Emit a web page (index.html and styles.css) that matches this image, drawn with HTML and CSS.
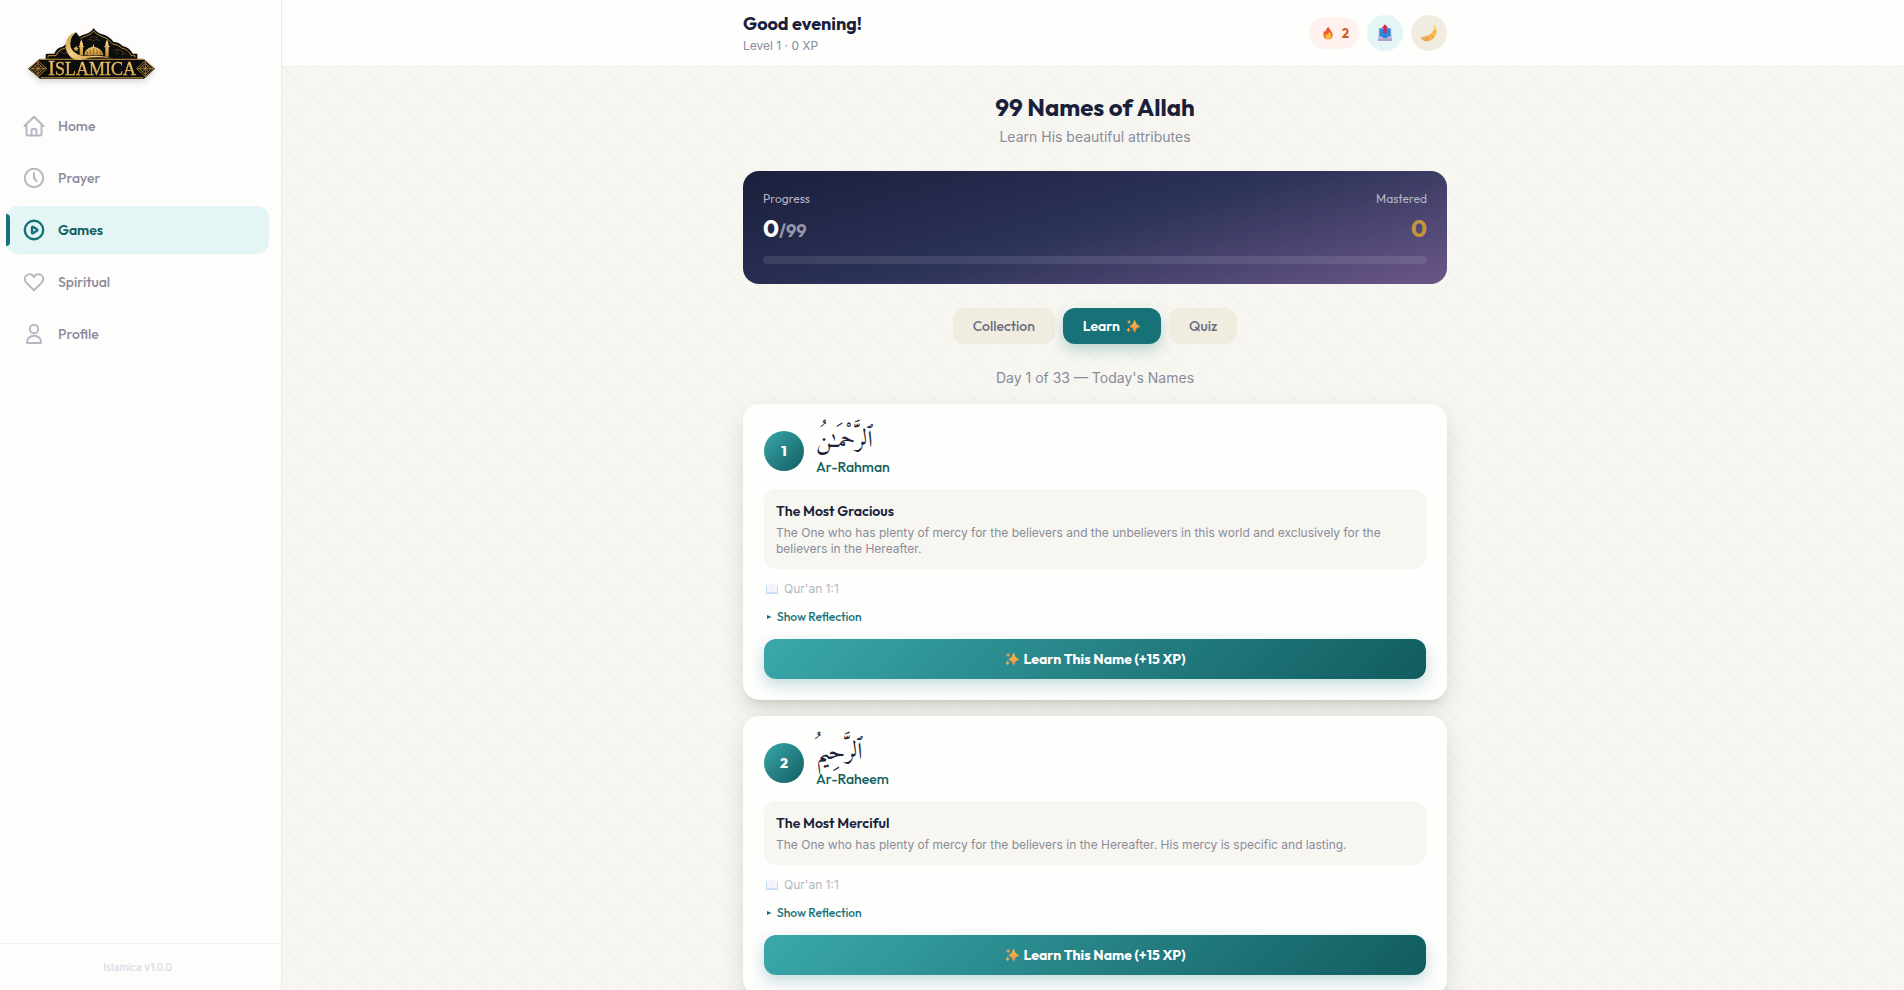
FILE: index.html
```html
<!DOCTYPE html>
<html lang="en">
  <head>
  <meta charset="utf-8">
  <title>Islamica</title>
  <link rel="stylesheet" href="styles.css">
  </head>
  <body>
    <!-- shared icons -->
    <svg class="defs" aria-hidden="true">
      <defs>
        <linearGradient id="spark" x1="0" y1="0" x2="0" y2="1">
          <stop offset="0" stop-color="#ffc23d"/><stop offset="1" stop-color="#f0864f"/>
        </linearGradient>
        <linearGradient id="flame" x1="0" y1="0" x2="0" y2="1">
          <stop offset="0" stop-color="#e5323b"/><stop offset="1" stop-color="#f98a2c"/>
        </linearGradient>
        <linearGradient id="moon" x1="1" y1="0" x2="0" y2="1">
          <stop offset="0" stop-color="#ffd45c"/><stop offset="1" stop-color="#ee9a4e"/>
        </linearGradient>
        <symbol id="sparkles" viewBox="0 0 16 16">
          <g fill="url(#spark)">
            <path d="M9.8 1.6 Q10.6 7 15.6 8.4 Q10.6 9.800 9.800 15.200 Q9 9.800 4.400 8.400 Q9 7 9.800 1.600Z" stroke="url(#spark)" stroke-width="1"/>
            <path d="M3.500 .8 Q3.900 3 6 3.500 Q3.900 4 3.500 6.200 Q3.100 4 1 3.500 Q3.100 3 3.500 .8Z"/>
            <path d="M2.900 9.800 Q3.400 12 5.600 12.500 Q3.400 13 2.900 15.400 Q2.400 13 .2 12.500 Q2.400 12 2.900 9.800Z"/>
          </g>
        </symbol>
        <symbol id="book" viewBox="0 0 14 14">
          <path d="M1 3h12v9H1z" fill="#9cc4ee"/>
          <path d="M2 2.500 Q5 1.500 7 3 Q9 1.500 12 2.500 V10.500 Q9 9.500 7 11 Q5 9.500 2 10.500Z" fill="#f3eefa"/>
          <path d="M7 3V11" stroke="#d9cdea" stroke-width=".7"/>
        </symbol>
      </defs>
    </svg>

    <div class="app">
      <aside class="sidebar">
        <a class="logo" href="#" aria-label="Islamica">
          <svg viewBox="0 0 435 210" width="145" height="70">
            <defs>
              <linearGradient id="gold" x1="0" y1="0" x2="0" y2="1">
                <stop offset="0" stop-color="#fbe6a0"/><stop offset=".5" stop-color="#e3b55a"/><stop offset="1" stop-color="#bd8a33"/>
              </linearGradient>
              <linearGradient id="crescent" x1="0" y1="0" x2="1" y2="1">
                <stop offset="0" stop-color="#c9983f"/><stop offset=".5" stop-color="#f3d488"/><stop offset="1" stop-color="#c9983f"/>
              </linearGradient>
            </defs>
            <path d="M77 118V104Q77 101 82 101H103Q110 82 128 80Q146 66 162 66Q176 46 198 42Q214 36 221 24Q228 36 244 42Q266 46 281 66Q296 66 308 78Q328 82 338 101H352V118Z" fill="#0d0d0e"/>
            <path d="M84 112V107H108Q114 88 132 86Q148 73 166 72Q180 52 200 48Q214 43 221 33Q228 43 242 48Q262 52 278 72Q292 73 305 84Q324 88 334 107H345V112" fill="none" stroke="#b98a35" stroke-width="3"/>
            <g fill="none" stroke="#5c4a26" stroke-width="2">
              <path d="M112 104q6-14 16-6t14-6M292 104q-6-14 6-14t12 12M306 108q4-12 16-4M280 92q10-8 18-2"/>
              <path d="M200 62q10-8 20 0q12-8 20 0M208 54q12-8 26 0"/>
            </g>
            <path d="M58 118H372L405 146L372 176H60L24 146Z" fill="#0d0d0e"/>
            <path d="M60 116H372V119H60ZM62 172H370V175H62Z" fill="#b98a35"/>
            <g fill="none" stroke="#b98a35" stroke-width="2.500">
              <path d="M28 146L54 122L80 146L54 170Z M36 146L54 130L72 146L54 162Z M45 138L63 154M63 138L45 154M54 124V168M32 146H78"/>
              <path d="M350 146L376 122L402 146L376 170Z M358 146L376 130L394 146L376 162Z M367 138L385 154M385 138L367 154M376 124V168M352 146H400"/>
            </g>
            <path d="M150 76C150 55 156 45 168 37L180 52L200 110H180C160 104 150 92 150 76Z" fill="#0d0d0e"/>
            <g fill="url(#gold)">
              <path d="M193 106Q192 86 218 80L220 70L222 80Q248 86 250 106Z"/>
              <path d="M179 106V72L184 58L189 72V106Z M256 110V72L261 58L266 72V110Z"/>
              <path d="M176 78H192V82H176ZM253 78H269V82H253Z"/>
              <path d="M168 77L171 83L177 84L172 88L174 94L168 91L163 94L164 88L160 84L166 83Z"/>
              <path d="M200 110Q240 102 278 116Q236 109 200 114Z"/>
            </g>
            <path d="M168 37C147 42 136 60 137 80C138 104 158 122 182 120C198 118 210 114 214 106C188 112 158 102 152 80C148 62 156 46 168 37Z" fill="url(#crescent)"/>
            <path d="M202 104V94M211 104V88M221 104V84M231 104V88M241 104V94" stroke="#6d4d17" stroke-width="2"/>
            <text class="logo-text" x="84" y="165"><tspan class="logo-cap">I</tspan>SLAMICA</text>
          </svg>
        </a>

        <nav class="nav">
          <a class="nav-item" href="#">
            <svg viewBox="0 0 24 24"><path d="M2.500 12L12 2.800L21.500 12M4.500 10V20a1.500 1.500 0 0 0 1.500 1.500H18a1.500 1.500 0 0 0 1.500-1.500V10M9.500 21.500V16.500a1.500 1.500 0 0 1 1.500-1.500h2a1.500 1.500 0 0 1 1.500 1.500V21.500"/></svg>
            <span>Home</span>
          </a>
          <a class="nav-item" href="#">
            <svg viewBox="0 0 24 24"><circle cx="12" cy="12" r="9.200"/><path d="M12 7V12L14.500 15"/></svg>
            <span>Prayer</span>
          </a>
          <a class="nav-item active" href="#">
            <svg viewBox="0 0 24 24"><circle cx="12" cy="12" r="9.200"/><path d="M10 9.300V14.700a.6.600 0 0 0 .9.500L15.200 12.500a.6.600 0 0 0 0-1L10.900 8.800a.6.600 0 0 0-.9.500Z"/></svg>
            <span>Games</span>
          </a>
          <a class="nav-item" href="#">
            <svg viewBox="0 0 24 24"><path d="M12 20.300L4.300 12.600A5 5 0 0 1 2.800 9C2.800 6.200 5 4.300 7.500 4.300C9.500 4.300 11.100 5.300 12 6.900C12.900 5.300 14.500 4.300 16.500 4.300C19 4.300 21.200 6.200 21.200 9A5 5 0 0 1 19.700 12.600Z"/></svg>
            <span>Spiritual</span>
          </a>
          <a class="nav-item" href="#">
            <svg viewBox="0 0 24 24"><circle cx="12" cy="7" r="4.200"/><path d="M5 20.200C5 16.500 8 13.800 12 13.800S19 16.500 19 20.200a.9.900 0 0 1-.9.900H5.900A.9.900 0 0 1 5 20.200Z"/></svg>
            <span>Profile</span>
          </a>
        </nav>

        <footer class="version">Islamica v1.0.0</footer>
      </aside>

      <div class="content">
        <header class="topbar">
          <div class="wrap topbar-inner">
            <div>
              <div class="greeting">Good evening!</div>
              <div class="level">Level 1 · 0 XP</div>
            </div>
            <div class="actions">
              <div class="streak">
                <svg viewBox="0 0 16 16" width="14" height="14">
                  <path d="M8.300 .8Q9 3 11 5Q13.300 7.500 13.300 10.300Q13.300 15.300 8 15.300Q2.700 15.300 2.700 10Q2.700 7.500 4.400 5.200Q5 6.200 5.600 6.400Q5.500 3.500 8.300 .8Z" fill="url(#flame)"/>
                  <path d="M9.500 6.500Q12 9 11.500 12Q11 14.800 8 14.800Q5 14.800 5 11.800Q5 10.500 6 9.500Q7 10.500 7.800 9.500Q8.800 8.500 9.500 6.500Z" fill="#fdbd35"/>
                </svg>
                <span>2</span>
              </div>
              <button class="round share" aria-label="Share">
                <svg viewBox="0 0 16 18" width="16" height="18">
                  <path d="M2 4H14L15 13.500V17H1V13.500Z" fill="#c9c0e0"/>
                  <path d="M2.500 4.500H13.500V12.500H11L10 14H6L5 12.500H2.500Z" fill="#2a86d9"/>
                  <path d="M1 14.500H15V17H1Z" fill="#aaa0cc"/>
                  <path d="M8 .2L11.200 4H9.500V9H6.500V4H4.800Z" fill="#dc2060"/>
                </svg>
              </button>
              <button class="round theme" aria-label="Toggle dark mode">
                <svg viewBox="0 0 18 18" width="18" height="18">
                  <path d="M14.500 .6Q18.600 7 15 12.500Q11 18.200 4.500 17Q1.500 16 .4 12.500Q1.500 13.300 3.500 12.900Q14.500 11 14.500 .6Z" fill="url(#moon)"/>
                  <g fill="#e09a3c"><circle cx="12.500" cy="12.500" r=".9"/><circle cx="15" cy="8" r=".8"/><circle cx="7.500" cy="14.500" r="1"/></g>
                </svg>
              </button>
            </div>
          </div>
        </header>

        <main class="wrap page">
          <h1>99 Names of Allah</h1>
          <p class="subtitle">Learn His beautiful attributes</p>

          <section class="progress-card">
            <div class="progress-row">
              <div>
                <div class="label">Progress</div>
                <div class="value">0<span class="total">/99</span></div>
              </div>
              <div class="mastered">
                <div class="label">Mastered</div>
                <div class="value">0</div>
              </div>
            </div>
            <div class="track"></div>
          </section>

          <div class="tabs">
            <button class="tab">Collection</button>
            <button class="tab selected">Learn <svg width="16" height="14"><use href="#sparkles"/></svg></button>
            <button class="tab">Quiz</button>
          </div>

          <p class="day">Day 1 of 33 — Today's Names</p>

          <article class="name-card">
            <div class="name-head">
              <div class="number">1</div>
              <div>
                <div class="arabic" lang="ar">ٱلرَّحْمَـٰنُ</div>
                <div class="translit">Ar-Rahman</div>
              </div>
            </div>
            <div class="meaning">
              <h2>The Most Gracious</h2>
              <p>The One who has plenty of mercy for the believers and the unbelievers in this world and exclusively for the believers in the Hereafter.</p>
            </div>
            <div class="source"><svg width="14" height="14"><use href="#book"/></svg>Qur'an 1:1</div>
            <button class="reflection"><svg viewBox="0 0 8 8" width="8" height="8"><path d="M2 2L6.500 4L2 6Z"/></svg>Show Reflection</button>
            <button class="learn"><svg width="14" height="14"><use href="#sparkles"/></svg>Learn This Name (+15 XP)</button>
          </article>

          <article class="name-card">
            <div class="name-head">
              <div class="number">2</div>
              <div>
                <div class="arabic" lang="ar">ٱلرَّحِيمُ</div>
                <div class="translit">Ar-Raheem</div>
              </div>
            </div>
            <div class="meaning">
              <h2>The Most Merciful</h2>
              <p>The One who has plenty of mercy for the believers in the Hereafter. His mercy is specific and lasting.</p>
            </div>
            <div class="source"><svg width="14" height="14"><use href="#book"/></svg>Qur'an 1:1</div>
            <button class="reflection"><svg viewBox="0 0 8 8" width="8" height="8"><path d="M2 2L6.500 4L2 6Z"/></svg>Show Reflection</button>
            <button class="learn"><svg width="14" height="14"><use href="#sparkles"/></svg>Learn This Name (+15 XP)</button>
          </article>
        </main>
      </div>
    </div>
  </body>
</html>
```

FILE: styles.css
```css
* {
  box-sizing: border-box;
}
body {
  margin: 0;
  font-family: Inter, sans-serif;
  color: #1a1f3c;
  background-color: #f7f6f1;
  background-image: url("data:image/svg+xml,%3Csvg xmlns='http://www.w3.org/2000/svg' width='40' height='40'%3E%3Cg fill='none' stroke='%231a1f3c' stroke-opacity='.03'%3E%3Cpath d='M20 0L40 20L20 40L0 20Z'/%3E%3Cpath d='M20 5L35 20L20 35L5 20Z' stroke-width='.7'/%3E%3C/g%3E%3C/svg%3E");
  background-position: -6px -2px;
}
h1, h2, p {
  margin: 0;
}
a {
  text-decoration: none;
}
button {
  border: 0;
  padding: 0;
  cursor: pointer;
}
h1, h2, button, .nav-item, .greeting, .streak, .label, .value, .number, .translit {
  font-family: Outfit, Lato, sans-serif;
}
.defs {
  position: absolute;
  width: 0;
  height: 0;
}
.app {
  display: flex;
  height: 100vh;
}

/* sidebar */
.sidebar {
  display: flex;
  flex-direction: column;
  flex: none;
  width: 282px;
  background: #fefdfc;
  border-right: 1px solid #efede0;
}
.logo {
  height: 102px;
  padding: 20px 20px 0;
  filter: drop-shadow(0 3px 3px rgba(0, 0, 0, .15));
}
.logo-text {
  font-family: "Liberation Serif", serif;
  font-size: 54px;
  fill: url(#gold);
  stroke: #e3b55a;
  stroke-width: 1;
}
.logo-cap {
  font-size: 64px;
}
.nav {
  display: flex;
  flex-direction: column;
  gap: 4px;
  flex: 1;
  padding: 0 12px 0 6px;
}
.nav-item {
  display: flex;
  align-items: center;
  gap: 12px;
  height: 48px;
  padding: 0 16px;
  border-radius: 12px;
  font-size: 14px;
  font-weight: 500;
  color: #8a8c9e;
}
.nav-item svg {
  width: 24px;
  height: 24px;
  fill: none;
  stroke: #b5b7c3;
  stroke-width: 2;
  stroke-linecap: round;
  stroke-linejoin: round;
}
.nav-item.active {
  position: relative;
  background: #e4f5f6;
  color: #125e60;
  font-weight: 600;
}
.nav-item.active svg {
  stroke: #167276;
  stroke-width: 2.4;
}
.nav-item.active::before {
  content: "";
  position: absolute;
  left: 0;
  top: 8px;
  width: 4px;
  height: 32px;
  border-radius: 0 4px 4px 0;
  background: #167276;
}
.version {
  height: 47px;
  padding: 0 6px 0 0;
  border-top: 1px solid #f3f2ee;
  font-size: 10px;
  line-height: 47px;
  text-align: center;
  color: #d2d4da;
}

/* top bar */
.content {
  flex: 1;
  overflow-y: auto;
  scrollbar-width: none;
}
.wrap {
  width: 100%;
  max-width: 708px;
  margin: 0 auto;
  padding-left: 4px;
}
.topbar {
  background: #fefefc;
  border-bottom: 1px solid #efede0;
}
.topbar-inner {
  display: flex;
  align-items: center;
  justify-content: space-between;
  height: 66px;
}
.greeting {
  font-size: 18px;
  font-weight: 700;
  line-height: 26px;
}
.level {
  font-size: 12px;
  line-height: 18px;
  color: #8a8c9a;
}
.actions {
  display: flex;
  align-items: center;
  gap: 8px;
}
.streak {
  display: flex;
  align-items: center;
  gap: 7px;
  height: 32px;
  padding: 0 10px 0 12px;
  border-radius: 16px;
  background: #fef1ee;
  color: #cf5a32;
  font-size: 13px;
  font-weight: 700;
}
.round {
  display: flex;
  align-items: center;
  justify-content: center;
  width: 36px;
  height: 36px;
  border-radius: 50%;
}
.share {
  background: #e4f5f6;
}
.theme {
  background: #f0ece0;
}

/* page */
.page {
  padding-top: 24px;
  padding-bottom: 24px;
}
h1 {
  font-size: 24px;
  line-height: 32px;
  text-align: center;
}
.subtitle, .day {
  font-size: 14px;
  line-height: 20px;
  text-align: center;
  color: #8a8c9a;
}
.subtitle {
  margin: 4px 0 24px;
}
.progress-card {
  padding: 20px;
  border-radius: 16px;
  background: linear-gradient(165deg, #1a1f3c 0%, #2d3359 50%, #6b5788 100%);
}
.progress-row {
  display: flex;
  justify-content: space-between;
  margin-bottom: 13px;
}
.mastered {
  text-align: right;
}
.label {
  font-size: 12px;
  line-height: 16px;
  color: #b4b5c3;
}
.value {
  margin-top: 6px;
  font-size: 24px;
  font-weight: 700;
  line-height: 30px;
  color: #fff;
}
.mastered .value {
  color: #c4953c;
}
.total {
  font-size: 18px;
  line-height: 18px;
  color: #9496a8;
}
.track {
  height: 8px;
  border-radius: 4px;
  background: rgba(255, 255, 255, .1);
}
.tabs {
  display: flex;
  justify-content: center;
  gap: 8px;
  margin: 24px 0;
}
.tab {
  display: flex;
  align-items: center;
  gap: 5px;
  height: 36px;
  padding: 0 20px;
  border-radius: 12px;
  background: #f0ece0;
  color: #6b6e80;
  font-size: 14px;
  font-weight: 500;
}
.tab.selected {
  background: #167276;
  color: #fff;
  font-weight: 600;
  box-shadow: 0 6px 14px rgba(22, 114, 118, .25);
}
.day {
  margin-bottom: 16px;
}
.name-card {
  margin-bottom: 16px;
  padding: 20px;
  border: 1px solid #fefefc;
  border-radius: 16px;
  background: #fefefd;
  box-shadow: 0 10px 24px rgba(40, 38, 30, .12), 0 8px 10px -6px rgba(40, 38, 30, .14);
}
.name-head {
  display: flex;
  align-items: center;
  gap: 12px;
  margin-bottom: 12px;
}
.number {
  display: flex;
  align-items: center;
  justify-content: center;
  width: 40px;
  height: 40px;
  border-radius: 50%;
  background: linear-gradient(135deg, #3aa8ab, #115c5f);
  color: #fff;
  font-size: 14px;
  font-weight: 800;
}
.arabic {
  font-family: Amiri, "Noto Naskh Arabic", "DejaVu Sans", serif;
  font-size: 24px;
  line-height: 32px;
}
.translit {
  font-size: 14px;
  font-weight: 500;
  line-height: 20px;
  color: #125e60;
}
.meaning {
  padding: 12px;
  border-radius: 12px;
  background: #f7f6f1;
}
h2 {
  margin-bottom: 4px;
  font-size: 14px;
  font-weight: 600;
  line-height: 20px;
}
.meaning p {
  font-size: 12px;
  line-height: 16px;
  color: #8a8c9a;
}
.source {
  display: flex;
  align-items: center;
  gap: 5px;
  margin: 12px 0;
  padding-left: 1px;
  font-size: 12px;
  line-height: 16px;
  color: #b5b7c3;
}
.source svg {
  opacity: .6;
}
.reflection {
  display: flex;
  align-items: center;
  gap: 4px;
  margin-bottom: 14px;
  background: none;
  color: #167276;
  font-size: 12px;
  font-weight: 500;
  line-height: 16px;
}
.reflection svg {
  margin-left: 1px;
  fill: #167276;
}
.learn {
  display: flex;
  align-items: center;
  justify-content: center;
  gap: 5px;
  width: 100%;
  height: 40px;
  border-radius: 12px;
  background: linear-gradient(135deg, #3aa8ab, #115c5f);
  color: #fff;
  font-size: 14px;
  font-weight: 700;
  box-shadow: 0 6px 16px rgba(22, 114, 118, .25);
}
```
